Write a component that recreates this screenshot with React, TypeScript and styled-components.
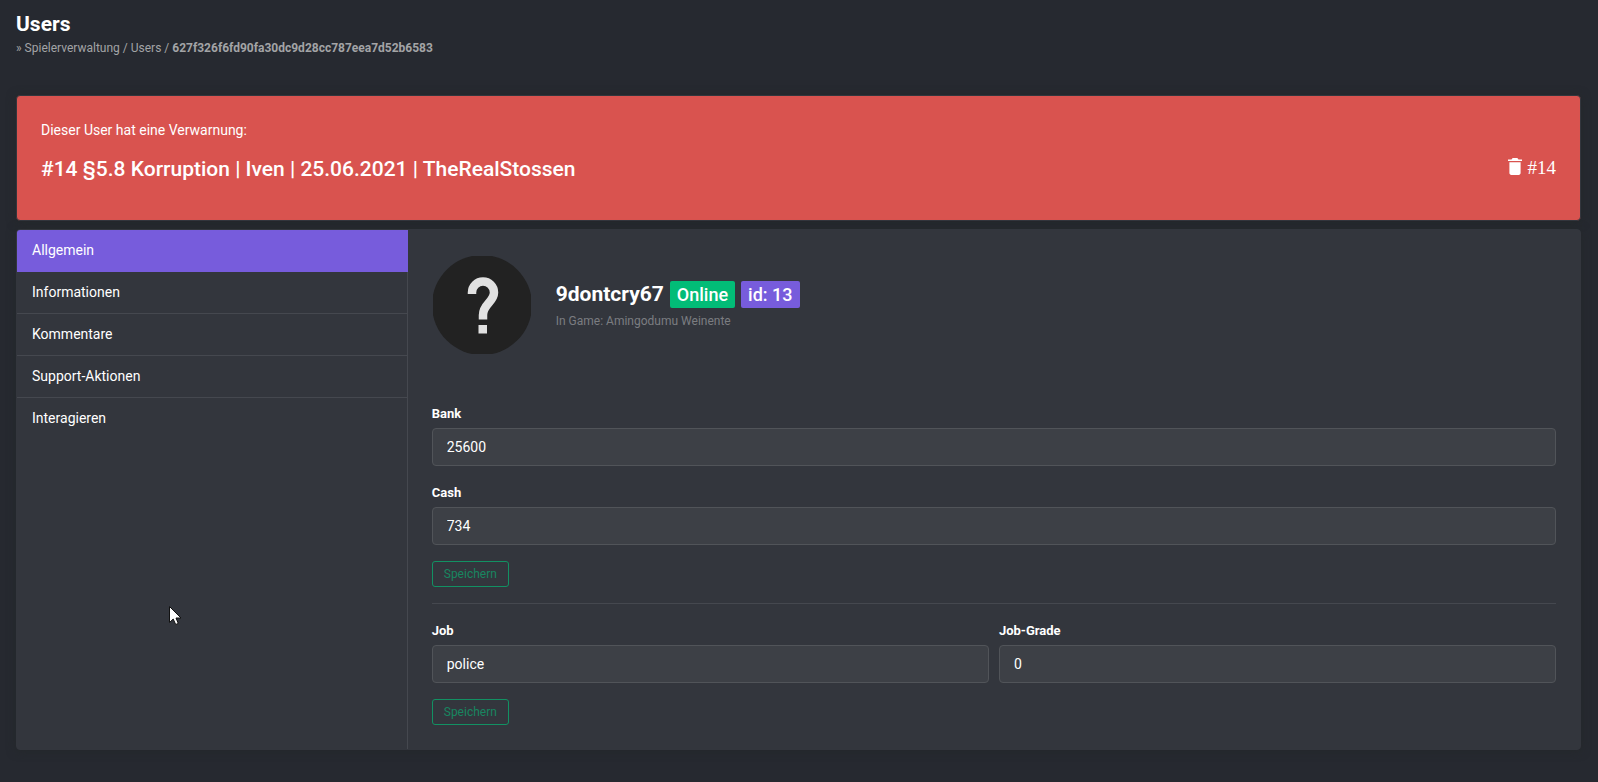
import React, { useState } from "react";
import styled, { createGlobalStyle } from "styled-components";

const colors = {
  page: "#262930",
  card: "#33363d",
  line: "#45484f",
  field: "#3d4046",
  fieldBorder: "#515459",
  danger: "#d9534f",
  primary: "#775cdc",
  success: "#02bc77",
  muted: "#a3a4a6",
};

const GlobalStyle = createGlobalStyle`
  *, *::before, *::after { box-sizing: border-box; }
  body {
    margin: 0;
    background: ${colors.page};
    color: #fff;
    font-family: Roboto, "Liberation Sans", sans-serif;
    font-size: 14px;
    line-height: 20px;
  }
`;

const Page = styled.main`
  position: relative;
  padding: 8px 17px 32px 16px;
`;

const PageHeader = styled.header`
  margin-bottom: 36px;
`;

const Title = styled.h1`
  margin: 0;
  font-size: 21px;
  font-weight: 700;
  line-height: 32px;
`;

const Breadcrumb = styled.nav`
  color: ${colors.muted};
  font-size: 12px;
  line-height: 16px;
  padding-bottom: 3px;

  a {
    color: inherit;
    text-decoration: none;
  }
`;

const Card = styled.section`
  border: 1px solid ${colors.card};
  border-radius: 4px;
  background: ${colors.card};
  box-shadow: 0 1px 10px #24282a;
`;

const Warning = styled(Card)`
  margin-bottom: 8px;
  padding: 24px;
  min-height: 126px;
  background: ${colors.danger};
`;

const WarningIntro = styled.p`
  margin: 0 0 15px;
`;

const WarningRow = styled.div`
  display: flex;
  align-items: center;
  justify-content: space-between;
`;

const WarningTitle = styled.h2`
  margin: 0;
  font-size: 21px;
  font-weight: 500;
  line-height: 28px;
`;

const DeleteButton = styled.button`
  display: flex;
  align-items: center;
  gap: 6px;
  padding: 0 0 2px;
  border: 0;
  background: none;
  color: #fff;
  font-family: "Liberation Serif", serif;
  font-size: 19px;
  line-height: 24px;
  cursor: pointer;

  svg {
    margin-bottom: 3px;
  }
`;

const UserCard = styled(Card)`
  display: grid;
  grid-template-columns: 1fr 3fr;
`;

const SideNav = styled.nav`
  border-right: 1px solid ${colors.line};
`;

const NavItem = styled.button<{ $active: boolean }>`
  display: block;
  width: ${(p) => (p.$active ? "calc(100% + 1px)" : "100%")};
  height: 42px;
  padding: 0 15px 2px;
  border: 0;
  border-bottom: 1px solid ${(p) => (p.$active ? colors.primary : colors.line)};
  background: ${(p) => (p.$active ? colors.primary : "transparent")};
  color: #fff;
  font: inherit;
  text-align: left;
  cursor: pointer;

  &:first-child { border-top-left-radius: 3px; }
  &:last-child { border-bottom-color: transparent; }
`;

const Content = styled.div`
  min-width: 0;
  padding: 25px 24px 24px;
`;

const Profile = styled.div`
  display: flex;
  align-items: center;
  gap: 24px;
  margin-bottom: 48px;
`;

const Name = styled.h2`
  display: flex;
  align-items: center;
  gap: 6px;
  margin: 1px 0 3px;
  font-size: 21px;
  font-weight: 700;
  line-height: 27px;
`;

const Badge = styled.span<{ $color: string }>`
  padding: 0 7px;
  border-radius: 2px;
  background: ${(p) => p.$color};
  font-size: 18px;
  font-weight: 500;
`;

const InGame = styled.p`
  margin: 0;
  color: #7b7d81;
  font-size: 12px;
`;

const Form = styled.form`
  display: grid;
  gap: 16px;
`;

const FieldRow = styled.div`
  display: grid;
  grid-template-columns: 1fr 1fr;
  gap: 10px;
`;

const Label = styled.label`
  display: block;
  font-size: 13px;
  font-weight: 700;
  line-height: 22px;
`;

const Input = styled.input`
  display: block;
  width: 100%;
  height: 38px;
  margin-top: 3px;
  padding: 0 14px;
  border: 1px solid ${colors.fieldBorder};
  border-radius: 4px;
  background: ${colors.field};
  color: #fff;
  font-family: inherit;
  font-size: 14px;
  font-weight: 400;
`;

const SaveButton = styled.button`
  justify-self: start;
  height: 26px;
  padding: 0 11px;
  border: 1px solid #129163;
  border-radius: 3px;
  background: none;
  color: #188660;
  font-family: inherit;
  font-size: 12px;
  cursor: pointer;
`;

const Divider = styled.hr`
  height: 1px;
  margin: 16px 0;
  border: 0;
  background: ${colors.line};
`;

const Pointer = styled.svg`
  position: absolute;
  left: 169px;
  top: 606px;
  pointer-events: none;
`;

const TrashIcon = () => (
  <svg width="14" height="17" viewBox="96 64 320 384" fill="currentColor" aria-hidden="true">
    <path d="M128 405.429C128 428.846 147.198 448 170.667 448h170.667C364.802 448 384 428.846 384 405.429V160H128v245.429zM416 96h-80l-26.785-32H202.786L176 96H96v32h320V96z" />
  </svg>
);

const Avatar = () => (
  <svg width="100" height="100" viewBox="0 0 100 100" role="img" aria-label="Avatar">
    <defs>
      <clipPath id="frame">
        <rect x="1" y="1" width="98" height="98" />
      </clipPath>
    </defs>
    <circle cx="50" cy="50" r="50" fill="#222" clipPath="url(#frame)" />
    <path d="M40 39V37.500a11 11 0 0 1 22 0C62 47 51 49 51 60V64.500" fill="none" stroke="#e1e1e1" strokeWidth="8.500" />
    <rect x="46.500" y="70" width="8.500" height="8.500" fill="#e1e1e1" />
  </svg>
);

const tabs = ["Allgemein", "Informationen", "Kommentare", "Support-Aktionen", "Interagieren"];

const Field = ({ label, value }: { label: string; value: string }) => (
  <Label>
    {label}
    <Input type="text" defaultValue={value} />
  </Label>
);

export default function App() {
  const [tab, setTab] = useState(tabs[0]);
  const keep = (e: React.FormEvent) => e.preventDefault();

  return (
    <>
      <GlobalStyle />
      <Page>
        <PageHeader>
          <Title>Users</Title>
          <Breadcrumb>
            » <a href="#players">Spielerverwaltung</a> / <a href="#users">Users</a> /{" "}
            <b>627f326f6fd90fa30dc9d28cc787eea7d52b6583</b>
          </Breadcrumb>
        </PageHeader>

        <Warning>
          <WarningIntro>Dieser User hat eine Verwarnung:</WarningIntro>
          <WarningRow>
            <WarningTitle>#14 §5.8 Korruption | Iven | 25.06.2021 | TheRealStossen</WarningTitle>
            <DeleteButton type="button">
              <TrashIcon />
              #14
            </DeleteButton>
          </WarningRow>
        </Warning>

        <UserCard>
          <SideNav>
            {tabs.map((t) => (
              <NavItem key={t} type="button" $active={t === tab} onClick={() => setTab(t)}>
                {t}
              </NavItem>
            ))}
          </SideNav>
          <Content>
            <Profile>
              <Avatar />
              <div>
                <Name>
                  9dontcry67
                  <Badge $color={colors.success}>Online</Badge>
                  <Badge $color={colors.primary}>id: 13</Badge>
                </Name>
                <InGame>In Game: Amingodumu Weinente</InGame>
              </div>
            </Profile>
            <Form onSubmit={keep}>
              <Field label="Bank" value="25600" />
              <Field label="Cash" value="734" />
              <SaveButton type="submit">Speichern</SaveButton>
            </Form>
            <Divider />
            <Form onSubmit={keep}>
              <FieldRow>
                <Field label="Job" value="police" />
                <Field label="Job-Grade" value="0" />
              </FieldRow>
              <SaveButton type="submit">Speichern</SaveButton>
            </Form>
          </Content>
        </UserCard>
        <Pointer width="13" height="20" viewBox="0 0 13 20" aria-hidden="true">
          <path d="M.5.500v16l3.700-3.500 2.500 5.500 2.600-1.100L7 12h5z" fill="#fff" stroke="#111" />
        </Pointer>
      </Page>
    </>
  );
}
